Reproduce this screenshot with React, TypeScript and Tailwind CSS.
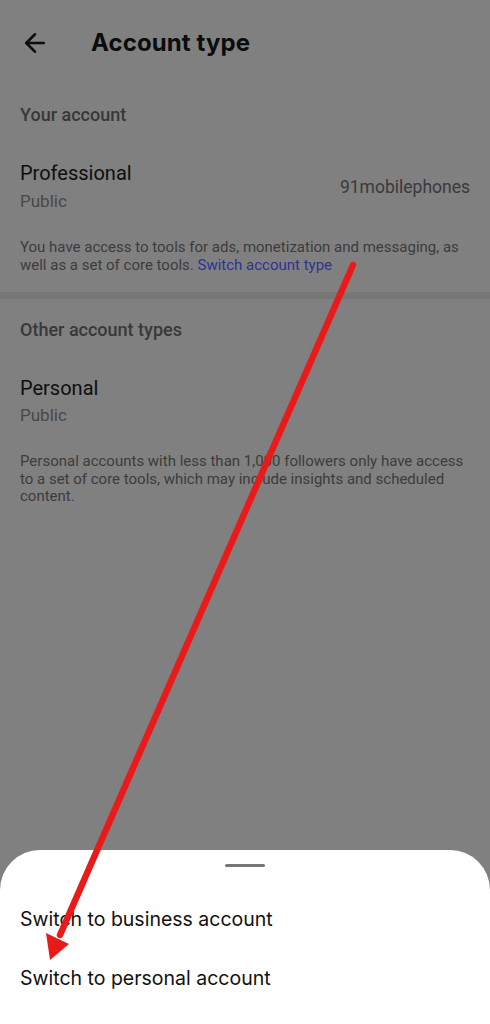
import { ArrowLeft } from 'lucide-react';

const body = { fontFamily: 'Roboto, "Noto Sans", sans-serif' };
const display = { fontFamily: 'Inter, "Noto Sans", sans-serif' };

function Arrow() {
  // red annotation arrow drawn over the screenshot
  return (
    <svg className="absolute inset-0 pointer-events-none" width="490" height="1024" viewBox="0 0 490 1024">
      <line x1="353" y1="265" x2="60" y2="935" stroke="#ea1a1a" strokeWidth="6.5" strokeLinecap="round" />
      <polygon points="50,960 46,933 69,944" fill="#ea1a1a" />
    </svg>
  );
}

export default function App() {
  return (
    <div className="relative h-[1024px] w-[490px] overflow-hidden bg-[#808080] flex flex-col" style={body}>
      <div className="flex items-center h-[86px] pl-[20px]">
        <ArrowLeft className="w-[30px] h-[30px] text-[#0c0c0c]" strokeWidth={2} />
        <h1 className="ml-[41px] text-[24px] font-bold text-[#0c0c0c] tracking-[0.1px]" style={display}>
          Account type
        </h1>
      </div>

      <div className="px-[20px]">
        <div className="pt-[18px] text-[18px] leading-[22px] font-medium text-[#383838]">Your account</div>
        <div className="flex items-center justify-between mt-[35px]">
          <div>
            <div className="text-[20px] leading-[24px] text-[#0e0e0e]">Professional</div>
            <div className="text-[17px] leading-[22px] mt-[5px] text-[#484848]">Public</div>
          </div>
          <div className="text-[17.5px] text-[#3a3a3a] mt-[2px]">91mobilephones</div>
        </div>
        <p className="mt-[26px] text-[15px] leading-[18px] text-[#3c3c3c]">
          You have access to tools for ads, monetization and messaging, as well as a set of core tools.{' '}
          <span className="text-[#2c348f]">Switch account type</span>
        </p>
      </div>

      <div className="mt-[18px] h-[7px] bg-[#777777]" />

      <div className="px-[20px]">
        <div className="pt-[20px] text-[18px] leading-[22px] font-medium text-[#383838]">Other account types</div>
        <div className="mt-[35px]">
          <div className="text-[20px] leading-[24px] text-[#0e0e0e]">Personal</div>
          <div className="text-[17px] leading-[22px] mt-[4px] text-[#484848]">Public</div>
        </div>
        <p className="mt-[27px] text-[15px] leading-[17.5px] text-[#3c3c3c]">
          Personal accounts with less than 1,000 followers only have access to a set of core tools, which may include insights and scheduled content.
        </p>
      </div>

      <div className="mt-auto h-[174px] bg-white rounded-t-[40px] flex flex-col" style={display}>
        <div className="mx-auto mt-[14px] w-[40px] h-[3px] rounded-full bg-[#777777]" />
        <div className="pl-[20px] mt-[40px] text-[19.5px] leading-[24px] text-[#111111]">Switch to business account</div>
        <div className="pl-[20px] mt-[35px] text-[19.5px] leading-[24px] text-[#111111]">Switch to personal account</div>
      </div>

      <Arrow />
    </div>
  );
}
